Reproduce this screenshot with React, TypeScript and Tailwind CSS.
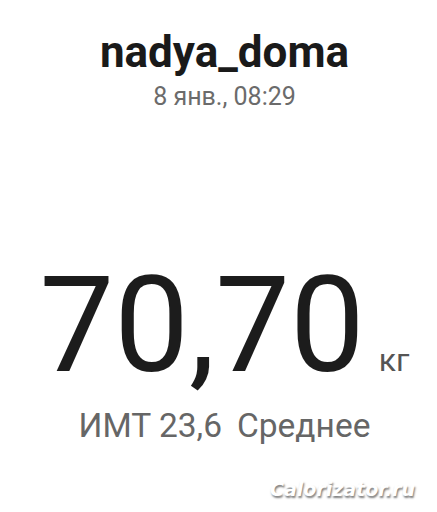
export default function App() {
  return (
    <div className="relative w-[437px] h-[512px] bg-white overflow-hidden font-['Roboto',sans-serif]">
      <div className="flex flex-col items-center pl-[12px] pt-[30px]">
        <div className="text-[44px] leading-none font-bold text-[#1a1a1a]">nadya_doma</div>
        <div className="mt-[10px] text-[25px] leading-none text-[#6b6b6b]">8 янв., 08:29</div>
        <div className="mt-[150px] flex items-baseline gap-[14px] text-[#1c1c1c]">
          <span className="text-[133px] leading-none">70,70</span>
          <span className="text-[32px] leading-none text-[#555555]">кг</span>
        </div>
        <div className="mt-[17px] flex gap-[15px] text-[33.5px] leading-none text-[#666666]">
          <span>ИМТ 23,6</span>
          <span>Среднее</span>
        </div>
      </div>
      <div className="absolute right-[22px] bottom-[13px] font-['DejaVu_Sans',sans-serif] font-bold italic text-[19px] leading-none text-white [text-shadow:1px_2px_2px_rgba(0,0,0,0.5)]">
        Calorizator.ru
      </div>
    </div>
  );
}
